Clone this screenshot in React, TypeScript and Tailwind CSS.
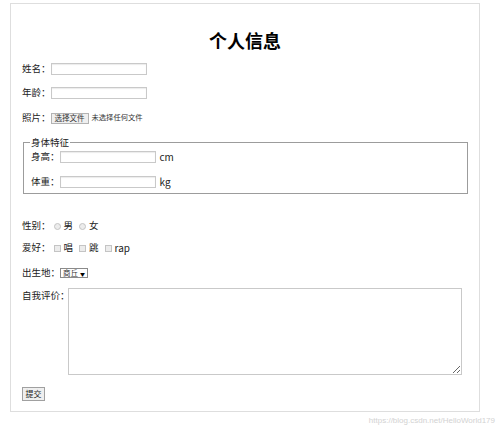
import * as React from "react";

const cjk = "font-['Noto_Sans_CJK_SC','Noto_Sans',sans-serif]";

function TextBox({ width = "w-[96px]" }: { width?: string }) {
  return <span className={`${width} block h-[12px] shrink-0 border border-[#c9c9c9] bg-white shadow-[inset_0_1px_1px_rgba(0,0,0,0.08)]`} />;
}

function Radio() {
  return <span className="block h-[7px] w-[7px] shrink-0 rounded-full border border-[#c4c4c4] bg-[#ececec]" />;
}

function Check() {
  return <span className="block h-[7px] w-[7px] shrink-0 border border-[#c4c4c4] bg-[#ececec]" />;
}

function Row({ children, className = "" }: { children: React.ReactNode; className?: string }) {
  return <div className={`flex h-[12px] items-center whitespace-nowrap leading-none ${className}`}>{children}</div>;
}

export default function App() {
  return (
    <div className={`${cjk} h-[430px] w-[500px] bg-white text-[9.5px] text-[#222]`}>
      <div className="ml-[10px] h-[409px] w-[470px] translate-y-[3px] border border-[#dedede] px-[11px] pt-[1px]">
        <h1 className="mt-[25px] h-[20px] text-center text-[18px] font-bold leading-[20px] text-black">个人信息</h1>

        <Row className="mt-[13px]">
          <span>姓名：</span>
          <TextBox />
        </Row>
        <Row className="mt-[12px]">
          <span>年龄：</span>
          <TextBox />
        </Row>
        <Row className="mt-[13px]">
          <span>照片：</span>
          <span className="flex h-[11px] w-[38px] shrink-0 items-center justify-center border border-[#b3b3b3] bg-[#efefef] text-[7.5px] text-[#333]">
            选择文件
          </span>
          <span className="ml-[3px] text-[7.3px] text-[#333]">未选择任何文件</span>
        </Row>

        <fieldset className="ml-[1px] mt-[12px] w-[445px] border border-[#9c9c9c] px-[7px] pb-[5px]">
          <legend className="-ml-[1px] h-[12px] px-[1px] leading-[12px]">身体特征</legend>
          <Row className="mt-[3px]">
            <span>身高：</span>
            <TextBox />
            <span className="ml-[4px] text-[10px]">cm</span>
          </Row>
          <Row className="mt-[13px]">
            <span>体重：</span>
            <TextBox />
            <span className="ml-[4px] text-[10px]">kg</span>
          </Row>
        </fieldset>

        <Row className="mt-[26px]">
          <span>性别：</span>
          <span className="ml-[3px]"><Radio /></span>
          <span className="ml-[3px]">男</span>
          <span className="ml-[6px]"><Radio /></span>
          <span className="ml-[3px]">女</span>
        </Row>
        <Row className="mt-[10px]">
          <span>爱好：</span>
          <span className="ml-[3px]"><Check /></span>
          <span className="ml-[3px]">唱</span>
          <span className="ml-[6px]"><Check /></span>
          <span className="ml-[3px]">跳</span>
          <span className="ml-[6px]"><Check /></span>
          <span className="ml-[3px] text-[10px]">rap</span>
        </Row>
        <Row className="mt-[13px]">
          <span>出生地：</span>
          <span className="flex h-[10px] w-[28px] shrink-0 items-center justify-between border border-[#8a8a8a] bg-white px-[2px] text-[7.5px] text-[#333]">
            <span>商丘</span>
            <span className="text-[5px] text-black">▼</span>
          </span>
        </Row>

        <div className="mt-[9px] flex">
          <span className="mt-[3px] w-[46px] shrink-0 whitespace-nowrap leading-none">自我评价：</span>
          <textarea className="h-[87px] w-[394px] border border-[#c9c9c9] bg-white outline-none" />
        </div>

        <button
          type="button"
          className="mt-[12px] flex h-[14px] w-[23px] items-center justify-center border border-[#a0a0a0] bg-[#efefef] text-[8px] leading-none text-[#222]"
        >
          提交
        </button>
      </div>
      <div className="mt-[8px] pr-[5px] text-right font-['Liberation_Sans',sans-serif] text-[8px] leading-none text-[#d2d2d2]">
        https://blog.csdn.net/HelloWorld179
      </div>
    </div>
  );
}
